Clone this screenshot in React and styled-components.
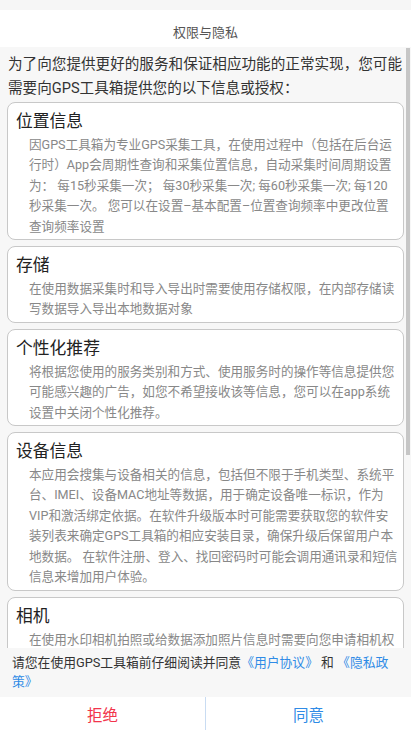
import React from "react";
import styled, { createGlobalStyle } from "styled-components";

const Global = createGlobalStyle`
  html, body { margin: 0; padding: 0; background: #f7f7f7; }
  body { font-family: Roboto, "Noto Sans CJK SC", "Noto Sans", sans-serif; }
  * { box-sizing: border-box; }
`;

const Page = styled.div`
  width: 411px;
  height: 730px;
  display: flex;
  flex-direction: column;
  background: #f7f7f7;
  overflow: hidden;
`;

const TopGap = styled.div`
  height: 10px;
  background: #f6f6f6;
  flex: none;
`;

const Header = styled.div`
  height: 37px;
  flex: none;
  background: #ffffff;
  display: flex;
  align-items: center;
  justify-content: center;
  font-size: 13px;
  color: #555;
  padding-top: 5px;
`;

const ScrollWrap = styled.div`
  position: relative;
  flex: 1;
  min-height: 0;
`;

const Scroll = styled.div`
  height: 100%;
  overflow: hidden;
  padding: 5px 7px 0 7px;
  background: #f7f7f7;
`;

const Thumb = styled.div`
  position: absolute;
  right: 1px;
  top: 1px;
  width: 4px;
  height: 407px;
  background: #c6c6c6;
`;

const Intro = styled.p`
  margin: 0 0 2px 1px;
  font-size: 14.6px;
  line-height: 24px;
  color: #333;
`;

const Cards = styled.div`
  display: flex;
  flex-direction: column;
  gap: 6px;
`;

const Card = styled.div`
  background: #fff;
  border: 1px solid #c8c8c8;
  border-radius: 8px;
  padding: 6px 3px 2px 8px;
`;

const CardTitle = styled.div`
  font-size: 16.8px;
  line-height: 24px;
  color: #222;
`;

const CardBody = styled.div`
  margin-top: 2px;
  padding-left: 13px;
  font-size: 12.6px;
  line-height: 20.4px;
  color: #888;
`;

const Footer = styled.div`
  flex: none;
  background: #f7f7f7;
  padding: 6px 12px 6px 12px;
  font-size: 12.8px;
  line-height: 18.5px;
  color: #333;
`;

const Link = styled.span`
  color: #2f8be6;
`;

const Buttons = styled.div`
  flex: none;
  height: 33px;
  display: grid;
  grid-template-columns: 205px 1px 1fr;
  background: #fff;
`;

const Btn = styled.div`
  display: flex;
  align-items: center;
  justify-content: center;
  font-size: 15.5px;
  color: ${(p) => p.$color};
`;

const Divider = styled.div`
  background: #c9dcf2;
`;

const sections = [
  {
    title: "位置信息",
    body:
      "因GPS工具箱为专业GPS采集工具，在使用过程中（包括在后台运行时）App会周期性查询和采集位置信息，自动采集时间周期设置为： 每15秒采集一次； 每30秒采集一次; 每60秒采集一次; 每120秒采集一次。 您可以在设置–基本配置–位置查询频率中更改位置查询频率设置",
  },
  {
    title: "存储",
    body: "在使用数据采集时和导入导出时需要使用存储权限，在内部存储读写数据导入导出本地数据对象",
  },
  {
    title: "个性化推荐",
    body:
      "将根据您使用的服务类别和方式、使用服务时的操作等信息提供您可能感兴趣的广告，如您不希望接收该等信息，您可以在app系统设置中关闭个性化推荐。",
  },
  {
    title: "设备信息",
    body:
      "本应用会搜集与设备相关的信息，包括但不限于手机类型、系统平台、IMEI、设备MAC地址等数据，用于确定设备唯一标识，作为VIP和激活绑定依据。在软件升级版本时可能需要获取您的软件安装列表来确定GPS工具箱的相应安装目录，确保升级后保留用户本地数据。 在软件注册、登入、找回密码时可能会调用通讯录和短信信息来增加用户体验。",
  },
  {
    title: "相机",
    body: "在使用水印相机拍照或给数据添加照片信息时需要向您申请相机权限，用于拍摄照片并保存到本地。",
  },
];

export default function App() {
  return (
    <Page>
      <Global />
      <TopGap />
      <Header>权限与隐私</Header>
      <ScrollWrap>
        <Scroll>
          <Intro>为了向您提供更好的服务和保证相应功能的正常实现，您可能需要向GPS工具箱提供您的以下信息或授权：</Intro>
          <Cards>
            {sections.map((s) => (
              <Card key={s.title}>
                <CardTitle>{s.title}</CardTitle>
                <CardBody>{s.body}</CardBody>
              </Card>
            ))}
          </Cards>
        </Scroll>
        <Thumb />
      </ScrollWrap>
      <Footer>
        请您在使用GPS工具箱前仔细阅读并同意<Link>《用户协议》</Link> 和 <Link>《隐私政策》</Link>
      </Footer>
      <Buttons>
        <Btn $color="#f2344c">拒绝</Btn>
        <Divider />
        <Btn $color="#2f8be6">同意</Btn>
      </Buttons>
    </Page>
  );
}
